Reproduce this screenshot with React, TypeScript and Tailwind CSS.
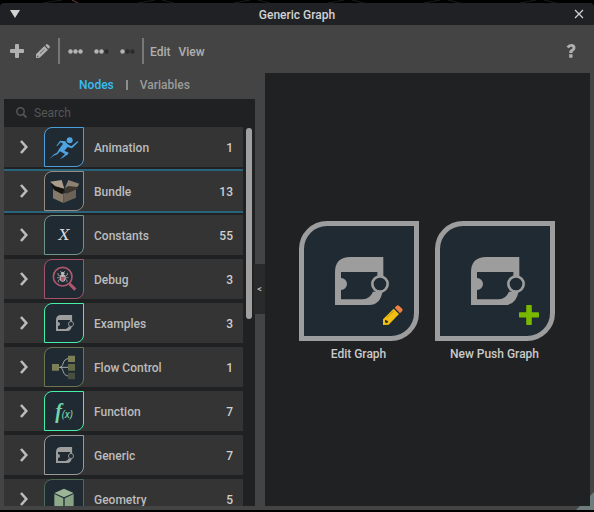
import type { ReactNode } from 'react';
import { clsx } from 'clsx';

function GraphGlyph({ className }: { className: string }) {
  return (
    <svg viewBox="0 0 162 144" className={className} aria-hidden="true">
      <path
        fill="#9d9d9d"
        d="M0 144V46Q0 0 46 0H145V60H127V45H18V63A18 18 0 0 1 18 99V127H84Q104 126 114 104L143 102Q136 144 102 144Z"
      />
      <circle cx="135" cy="81" r="23" fill="#1f2a32" stroke="#9d9d9d" strokeWidth="8" />
    </svg>
  );
}

function Glyph({ children }: { children: ReactNode }) {
  return (
    <svg viewBox="0 0 120 120" className="size-10 shrink-0" aria-hidden="true">
      {children}
    </svg>
  );
}

const categories = [
  {
    name: 'Animation',
    count: 1,
    border: 'border-[#4c9fdc]',
    icon: (
      <Glyph>
        <circle cx="77" cy="40" r="9" fill="#4ea3e0" />
        <path
          fill="#4ea3e0"
          d="M37 57L48 41L64 43L70 51L82 58L101 42L103 45L84 64L71 60L61 71L74 77L72 82L54 94L48 96L63 81L48 73L41 81L28 87L15 97L30 82L39 77L45 67L57 50L50 46L40 57Z"
        />
      </Glyph>
    ),
  },
  {
    name: 'Bundle',
    count: 13,
    border: 'border-[#978c7f]',
    selected: true,
    icon: (
      <Glyph>
        <path fill="#85796b" d="M27 50L58 68V96L27 82Z" />
        <path fill="#6c6257" d="M58 68L96 51V80L58 96Z" />
        <path fill="#15130f" d="M18 32L30 44L62 52L55 70L30 57Z" />
        <path fill="#ab9d8b" d="M18 32L53 27L61 53L34 46Z" />
        <path fill="#3d372f" d="M60 54L73 42L97 45L101 53L67 68Z" />
        <path fill="#8d8171" d="M64 48L73 27L106 38L100 48L72 45L64 52Z" />
      </Glyph>
    ),
  },
  {
    name: 'Constants',
    count: 55,
    border: 'border-[#6f9684]',
    icon: (
      <span className="font-['DejaVu_Serif',serif] text-[15px] leading-none font-normal text-[#dadada] italic">
        X
      </span>
    ),
  },
  {
    name: 'Debug',
    count: 3,
    border: 'border-[#a3536b]',
    icon: (
      <Glyph>
        <g fill="none" stroke="#b0566c">
          <circle cx="56" cy="53" r="28" strokeWidth="5" />
          <path d="M76 74L94 92" strokeWidth="9" />
        </g>
        <g fill="none" stroke="#bdbdbd" strokeWidth="2">
          <path d="M49 36L53 42M63 36L59 42M48 51L42 48V42M64 51L70 48V42M47 56H39M65 56H73M48 61L43 64V70M64 61L69 64V70" />
        </g>
        <circle cx="56" cy="43" r="5" fill="#bdbdbd" />
        <ellipse cx="56" cy="57" rx="9" ry="11" fill="#bdbdbd" />
        <path d="M49 53H63L60 65H52Z" fill="#b0566c" />
      </Glyph>
    ),
  },
  { name: 'Examples', count: 3, border: 'border-[#45efa8]', icon: <GraphGlyph className="ml-0.5 h-4 w-[18px]" /> },
  {
    name: 'Flow Control',
    count: 1,
    border: 'border-[#6d7652]',
    icon: (
      <Glyph>
        <path
          d="M44 61H74M48 61C60 60 54 35 74 35M48 61C60 62 54 87 74 87"
          fill="none"
          stroke="#a8adab"
          strokeWidth="3"
        />
        <path fill="#7b8057" d="M24 51H45V71H24ZM72 26H93V45H72Z" />
        <path fill="#626a48" d="M72 51H93V71H72Z" />
        <path fill="#485141" d="M72 77H93V97H72Z" />
      </Glyph>
    ),
  },
  {
    name: 'Function',
    count: 7,
    border: 'border-[#45efa8]',
    icon: (
      <span className="flex items-baseline text-[#74d3ad] italic">
        <span className="font-['Liberation_Serif',serif] text-xl leading-none font-bold">f</span>
        <span className="font-['Noto_Sans',sans-serif] text-[10px] leading-none font-medium">(x)</span>
      </span>
    ),
  },
  { name: 'Generic', count: 7, border: 'border-[#9a9a9a]', icon: <GraphGlyph className="ml-0.5 h-4 w-[18px]" /> },
  {
    name: 'Geometry',
    count: 5,
    border: 'border-[#4d6a58]',
    icon: (
      <Glyph>
        <path fill="#9bb596" d="M60 29L89 42L60 55L31 42Z" />
        <path fill="#8faa8b" d="M31 45L58 58V93L31 80Z" />
        <path fill="#88a284" d="M89 45L62 58V93L89 80Z" />
      </Glyph>
    ),
  },
];

const dotLevels = [
  { label: 'Expanded', lit: 3 },
  { label: 'Compact', lit: 2 },
  { label: 'Minimal', lit: 1 },
];

function Pencil() {
  return (
    <svg viewBox="0 0 60 60" className="size-5" aria-hidden="true">
      <path fill="#f2c014" d="M0 60V43L32 11L48 27L17 59Z" />
      <path fill="#ee8142" d="M35 8L41 2Q44 -1 48 2L58 12Q60 16 57 19L51 25Z" />
      <path d="M13 36L32 18" stroke="#5d4b12" strokeWidth="2" strokeDasharray="3 2" />
      <path fill="#2b2a20" d="M6 44L16 49L12 55L6 52Z" />
    </svg>
  );
}

function Plus() {
  return (
    <svg viewBox="0 0 61 61" className="size-5" aria-hidden="true">
      <path
        fill="#78b900"
        d="M24 0H37Q39 0 39 2V22H58Q61 22 61 25V36Q61 38 58 38H39V58Q39 61 37 61H24Q22 61 22 58V38H2Q0 38 0 36V25Q0 22 2 22H22V2Q22 0 24 0Z"
      />
    </svg>
  );
}

const actions = [
  { label: 'Edit Graph', badge: <Pencil /> },
  { label: 'New Push Graph', badge: <Plus /> },
];

function Toolbar() {
  return (
    <div className="flex h-12 shrink-0 items-center pt-1 pr-[18px] pl-[10px] text-[#b0b0b0]">
      <button aria-label="Add" className="mr-3">
        <svg viewBox="0 0 14 14" className="size-[14px]" fill="currentColor">
          <path d="M5 1Q5 0 6 0H8Q9 0 9 1V5H13Q14 5 14 6V8Q14 9 13 9H9V13Q9 14 8 14H6Q5 14 5 13V9H1Q0 9 0 8V6Q0 5 1 5H5Z" />
        </svg>
      </button>
      <button aria-label="Edit graph" className="mr-2">
        <svg viewBox="0 0 42 42" className="size-[14px]" fill="currentColor">
          <path d="M28 4L31 1Q33 0 35 1L41 7Q42 9 41 11L37 14Z" />
          <path fillRule="evenodd" d="M0 42V31L25 6L36 17L11 41ZM12 28L25 15L26 16L13 29ZM3 34L8 38L5 39L3 37Z" />
        </svg>
      </button>
      <span className="mr-2 h-[26px] w-0.5 bg-[#777]" />
      <div className="flex gap-[11px]">
        {dotLevels.map(({ label, lit }) => (
          <button key={label} aria-label={label}>
            <svg viewBox="0 0 15 5" className="h-[5px] w-[15px]">
              {[0, 1, 2].map((i) => (
                <circle key={i} cx={2.5 + i * 5} cy="2.5" r="2.2" fill={i < lit ? '#b4b4b4' : '#2b2b2b'} />
              ))}
            </svg>
          </button>
        ))}
      </div>
      <span className="mr-1.5 ml-[7px] h-[26px] w-0.5 bg-[#777]" />
      <button className="mr-2 pt-0.5">Edit</button>
      <button className="pt-0.5">View</button>
      <button aria-label="Help" className="ml-auto">
        <svg viewBox="0 0 27 42" className="h-[14px] w-[10px]" fill="currentColor">
          <path d="M0 8Q5 0 14 0Q27 0 27 12Q27 18 21 21Q18 23 18 27H8Q7 19 14 16Q18 14 18 11Q18 8 14 8Q10 8 7 13ZM8 31H18V41H8Z" />
        </svg>
      </button>
    </div>
  );
}

function NodeList() {
  return (
    <aside className="flex w-[251px] shrink-0 flex-col">
      <div className="flex h-[26px] shrink-0 items-center justify-center gap-3 pb-0.5 pl-[10px]">
        <button className="text-[#34bdf3]">Nodes</button>
        <span className="h-[10px] w-0.5 bg-[#8e8e8e]" />
        <button className="text-[#9b9b9b]">Variables</button>
      </div>
      <div className="flex min-h-0 flex-1 flex-col bg-[#202123]">
        <label className="flex h-[26px] shrink-0 items-center gap-[7px] pt-px pl-3 text-[#565656]">
          <svg viewBox="0 0 11 11" className="size-[11px]" fill="none" stroke="currentColor">
            <circle cx="4.5" cy="4.5" r="3.7" strokeWidth="1.5" />
            <path d="M7.3 7.3L10.5 10.5" strokeWidth="1.8" />
          </svg>
          <input
            type="text"
            aria-label="Search"
            placeholder="Search"
            className="min-w-0 flex-1 bg-transparent font-normal outline-none placeholder:text-[#565656]"
          />
        </label>
        <div className="flex min-h-0 flex-1 gap-[3px] pr-[3px]">
          <ul className="min-w-0 flex-1 overflow-hidden">
            {categories.map(({ name, count, border, icon, selected }) => (
              <li
                key={name}
                className={clsx(
                  'h-11 border-y-2 bg-[#343434] bg-clip-padding',
                  selected ? 'border-[#29647c]' : 'border-transparent',
                )}
              >
                <button className="flex h-full w-full items-center pr-[10px] pl-4 text-[#bcbcbc]">
                  <svg viewBox="0 0 8 14" className="mr-4 h-[14px] w-2" fill="none" stroke="currentColor">
                    <path d="M1 1L6.3 7L1 13" strokeWidth="2.6" />
                  </svg>
                  <span
                    className={clsx(
                      'mr-[10px] flex size-10 items-center justify-center overflow-hidden rounded-tl-lg rounded-br-lg border bg-[#1f2a32]',
                      border,
                    )}
                  >
                    {icon}
                  </span>
                  <span className="pt-0.5">{name}</span>
                  <span className="ml-auto pt-0.5 text-[#cfcfcf]">{count}</span>
                </button>
              </li>
            ))}
          </ul>
          <div className="mt-[3px] h-[191px] w-[6px] rounded-sm bg-[#a0a0a0]" />
        </div>
      </div>
    </aside>
  );
}

export default function App() {
  return (
    <div className="relative flex h-screen flex-col overflow-hidden bg-black pt-[3px] pb-0.5 font-['Roboto',sans-serif] text-xs font-medium">
      <svg viewBox="0 0 594 3" className="absolute inset-x-0 top-0 h-[3px]" fill="none" stroke="#1c1c1c">
        <path d="M43 3L62 0M138 3L155 0M162 0L174 3M234 3L250 0M258 0L270 3M328 3L344 0M352 0L364 3M424 3L440 0M448 0L460 3M520 3L536 0M544 0L556 3" />
        <path d="M72 0L78 3" stroke="#70403c" />
      </svg>
      <header className="flex h-[22px] shrink-0 items-center justify-between rounded-t-sm bg-[#202125] px-[10px] text-[#d2d2d2]">
        <button aria-label="Collapse">
          <svg viewBox="0 0 10 8" className="h-2 w-[10px]" fill="currentColor">
            <path d="M0 0H10L5 8Z" />
          </svg>
        </button>
        <h1 className="pt-0.5">Generic Graph</h1>
        <button aria-label="Close">
          <svg viewBox="0 0 10 10" className="size-[10px]" fill="none" stroke="currentColor">
            <path d="M1 1L9 9M9 1L1 9" strokeWidth="1.2" />
          </svg>
        </button>
      </header>
      <div className="relative flex min-h-0 flex-1 flex-col bg-[#444]">
        <svg viewBox="0 0 18 18" className="absolute right-0 bottom-0 size-[18px]" fill="#6d7c7d">
          <path d="M18 0V18H0Z" />
        </svg>
        <Toolbar />
        <main className="relative flex min-h-0 flex-1 px-1 pb-1">
          <NodeList />
          <div className="relative w-[10px] shrink-0">
            <button
              aria-label="Collapse panel"
              className="absolute top-[191px] right-0 h-[50px] w-[11px] bg-[#2a2a2a] text-[9px] text-[#c4c4c4]"
            >
              &lt;
            </button>
          </div>
          <section className="flex min-w-0 flex-1 items-center justify-center gap-4 bg-[#202123] pt-1 pr-0.5 text-[#cacaca]">
            {actions.map(({ label, badge }) => (
              <button key={label} className="flex w-[120px] flex-col items-center gap-[5px]">
                <span className="relative flex size-[120px] items-center justify-center rounded-tl-[28px] rounded-br-[28px] border-[5px] border-[#9d9d9d] bg-[#1f2a32] pl-1.5">
                  <GraphGlyph className="h-12 w-[54px]" />
                  <span className="absolute right-[11px] bottom-[11px]">{badge}</span>
                </span>
                {label}
              </button>
            ))}
          </section>
        </main>
      </div>
    </div>
  );
}
